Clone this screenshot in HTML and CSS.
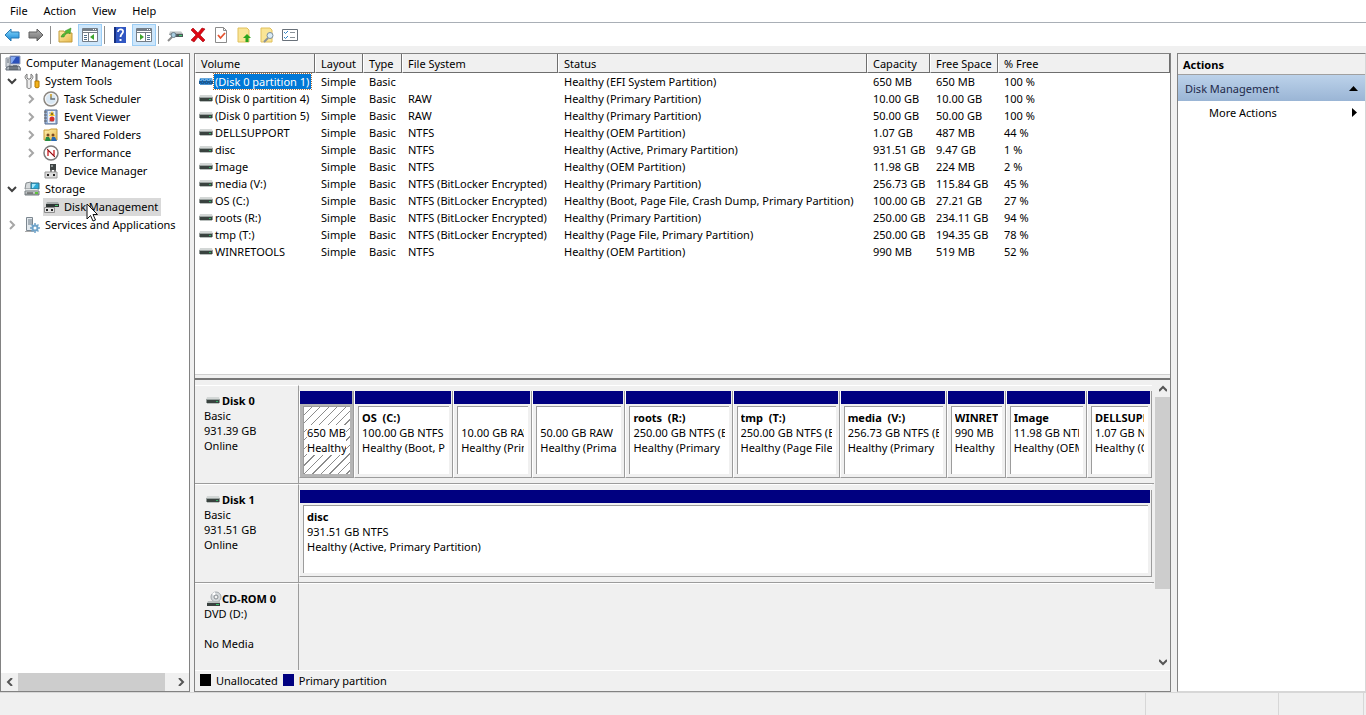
FILE: index.html
```html
<!DOCTYPE html>
<html lang="en">
<head>
  <meta charset="UTF-8">
  <title>Computer Management</title>
  <link rel="stylesheet" href="styles.css">
</head>
<body>
  <svg class="sprite" aria-hidden="true">
    <defs>
      <linearGradient id="blue-arrow" x1="0" y1="0" x2="0" y2="1"><stop offset="0" stop-color="#8fdcfb"/><stop offset="1" stop-color="#1184d6"/></linearGradient>
      <linearGradient id="gray-arrow" x1="0" y1="0" x2="0" y2="1"><stop offset="0" stop-color="#b5b5b5"/><stop offset="1" stop-color="#6f6f6f"/></linearGradient>
      <linearGradient id="folder" x1="0" y1="0" x2="1" y2="1"><stop offset="0" stop-color="#fdf0b0"/><stop offset="1" stop-color="#e8b94c"/></linearGradient>
      <linearGradient id="metal" x1="0" y1="0" x2="0" y2="1"><stop offset="0" stop-color="#e6e8e8"/><stop offset="1" stop-color="#8b9294"/></linearGradient>
    </defs>
    <symbol id="i-down" viewBox="0 0 10 10"><path d="M1 3l4 4 4-4" fill="none" stroke="#404040" stroke-width="2"/></symbol>
    <symbol id="i-right" viewBox="0 0 10 10"><path d="M3 1l4 4-4 4" fill="none" stroke="#a6a6a6" stroke-width="2"/></symbol>
    <symbol id="i-drive" viewBox="0 0 14 7"><path d="M1 0h12l1 3H0z" fill="#d3d7d6"/><path d="M0 2h14v1H0z" fill="#9ba3a1"/><path d="M1 3h12v3H1z" fill="#39423f"/><path d="M0 3h1v3H0zM13 3h1v3h-1z" fill="#8f9694"/><path d="M1 6h12v1H1z" fill="#b9bfbd"/><path d="M10 4h2v1h-2z" fill="#2fae62"/></symbol>
    <symbol id="i-drive-on" viewBox="0 0 14 7"><path d="M1 0h12l1 3H0z" fill="#6aa9dc"/><path d="M0 3h14v3H0z" fill="#1d5a92"/><path d="M1 6h12v1H1z" fill="#4f93cd"/><path d="M1 1h1v1H1zM3 2h1v1H3zM5 1h1v1H5zM7 2h1v1H7zM9 1h1v1H9zM11 2h1v1h-1zM1 5h1v1H1zM3 4h1v1H3zM5 5h1v1H5zM7 4h1v1H7zM9 5h1v1H9zM11 4h1v1h-1z" fill="#0f7ad8"/></symbol>
    <symbol id="i-cdrom" viewBox="0 0 16 16"><circle cx="10" cy="6" r="5" fill="#d5d9dc" stroke="#a3a8ac"/><path d="M10 6L6 3a5 5 0 0 1 3-2z" fill="#fff"/><circle cx="10" cy="6" r="2" fill="#f4f4f4" stroke="#858b90"/><path d="M2 10h12v2H1z" fill="#b4baba" opacity=".9"/><path d="M1 12h13v3H1z" fill="#39413f"/><path d="M10 13h3v1h-3z" fill="#36c46a"/></symbol>
    <symbol id="i-computer" viewBox="0 0 16 16"><path d="M5 1h10v8H5z" fill="#2b50ba" stroke="#9aa5ba"/><path d="M6 2h5L7 8H6z" fill="#86aaf0"/><path d="M8 10h4v1H8z" fill="#7d8592"/><path d="M1 3h4v9H1z" fill="#cfd4da" stroke="#8d959f"/><path d="M2 5h2M2 7h2" stroke="#69717c"/><path d="M1 13l3-2h10l2 3v1H1z" fill="#aeb5bd" stroke="#626b77"/><path d="M4 12h9M4 14h9" stroke="#343c46"/></symbol>
    <symbol id="i-tools" viewBox="0 0 16 16"><path d="M3 1v4l1 1h2l1-1V1c3 2 2 5 0 6v7c0 2-4 2-4 0V7C1 6 0 3 3 1z" fill="#ececec" stroke="#777"/><path d="M12 1h1v7h-1z" fill="#aaa" stroke="#777"/><path d="M11 8h4v6c0 1-4 1-4 0z" fill="#f3b31b" stroke="#b57800"/></symbol>
    <symbol id="i-clock" viewBox="0 0 16 16"><circle cx="8" cy="8" r="7" fill="#f2f4f6" stroke="#8b8781" stroke-width="1.500"/><circle cx="8" cy="8" r="5" fill="#d9e8f4"/><path d="M8 3v5h4" fill="none" stroke="#66727b" stroke-width="1.500"/><path d="M8 8L7 3h2z" fill="#e4b53d"/></symbol>
    <symbol id="i-event" viewBox="0 0 16 16"><path d="M2 1h12v14H2z" fill="#9db9df" stroke="#586c8f"/><path d="M5 2h7v12H5z" fill="#eef1f7"/><path d="M6 4h5M6 12h5" stroke="#7a90b8"/><path d="M1 3h3M1 6h3M1 9h3M1 12h3" stroke="#606060"/><path d="M9 2l3 5H6z" fill="#f5c527"/><path d="M9 4v2" stroke="#222"/><circle cx="9" cy="10" r="2.500" fill="#d5322e"/></symbol>
    <symbol id="i-shared" viewBox="0 0 16 16"><path d="M1 3h5l2-1h6v11H1z" fill="url(#folder)" stroke="#c79a36"/><circle cx="5" cy="8" r="1.500" fill="#7a4a24"/><path d="M2 14l1-4h3l2 4z" fill="#258c43"/><circle cx="10" cy="8" r="1.500" fill="#7a4a24"/><path d="M8 14l1-4h3l2 4z" fill="#2769b2"/></symbol>
    <symbol id="i-perf" viewBox="0 0 16 16"><circle cx="8" cy="8" r="7" fill="#fff" stroke="#7c7c7c" stroke-width="1.500"/><path d="M5 11V5l6 6V5" fill="none" stroke="#c91e22" stroke-width="1.300"/><path d="M4 4l8 8" stroke="#7e181a"/></symbol>
    <symbol id="i-device" viewBox="0 0 16 16"><path d="M7 1h6v6H7z" fill="#3f4444"/><path d="M8 2h2v2H8z" fill="#8b9292"/><path d="M11 7h2v3h-2zM7 7h2v2H7z" fill="#777"/><path d="M2 9h12v6H2z" fill="#dcdcdc" stroke="#999"/><path d="M4 11h2v2H4zM10 11h2v2h-2z" fill="#222"/></symbol>
    <symbol id="i-storage" viewBox="0 0 16 16"><path d="M2 2l5-1 2 2v5H1z" fill="#d6dadc" stroke="#848b8e"/><path d="M7 2h8v6H7z" fill="#2cabd8" stroke="#357187"/><path d="M8 3h4L9 7H8z" fill="#a7e9fb"/><path d="M2 8h11l2 2H1z" fill="#e5e8e8"/><path d="M1 10h14v4H1z" fill="url(#metal)" stroke="#757d80"/><path d="M3 12h6" stroke="#444"/><path d="M11 11h3v2h-3z" fill="#5ec23b"/></symbol>
    <symbol id="i-diskmgmt" viewBox="0 0 16 16"><path d="M4 3h11l1 2H3z" fill="#a8adad"/><path d="M3 5h13v3H3z" fill="#303736"/><path d="M12 6h3v1h-3z" fill="#4ac96e"/><path d="M1.500 8.500h10v5h-10z" fill="#e4e4e4" stroke="#8d8d8d"/><path d="M3 10h2v2H3zM8 10h2v2H8z" fill="#222"/></symbol>
    <symbol id="i-services" viewBox="0 0 16 16"><path d="M2.500.500h6v13h-6z" fill="#e3e9ee" stroke="#7c8790"/><path d="M4 3h4M4 5h4M4 7h4" stroke="#6b7883"/><path d="M1 14.500h9" stroke="#aaa"/><circle cx="11" cy="11" r="2.500" fill="#fff" stroke="#6fa3c9" stroke-width="2"/><path d="M11 6v2M11 14v2M6 11h2M14 11h2M7.500 7.500L9 9M13 13l1.500 1.500M14.500 7.500L13 9M9 13l-1.500 1.500" stroke="#6fa3c9" stroke-width="1.500"/></symbol>
    <symbol id="i-back" viewBox="0 0 16 16"><path d="M1 8l6-6v3h8v6H7v3z" fill="url(#blue-arrow)" stroke="#2779b2"/></symbol>
    <symbol id="i-forward" viewBox="0 0 16 16"><path d="M15 8L9 2v3H1v6h8v3z" fill="url(#gray-arrow)" stroke="#5f5f5f"/></symbol>
    <symbol id="i-up" viewBox="0 0 16 16"><path d="M1 4h5l1 2h7v9H1z" fill="url(#folder)" stroke="#c39b3b"/><path d="M3 10c1-3 3-4 5-4L7 4l6-3-1 6-1-1c-3 0-4 2-5 4z" fill="#51b934" stroke="#2f8620" stroke-width=".5"/></symbol>
    <symbol id="i-treepane" viewBox="0 0 16 16"><path d="M.5 1.500h15v13H.500z" fill="#fff" stroke="#747d86"/><path d="M1 2h14v2H1z" fill="#747d86"/><path d="M1 5.500h14M6.500 6v8" stroke="#747d86"/><path d="M2 8.500h3M2 10.500h3M2 12.500h3" stroke="#4f6f8c"/><path d="M12 7v6l-4-3z" fill="#3ea52d"/><path d="M11 2h1v1h-1zM13 2h1v1h-1z" fill="#fff"/></symbol>
    <symbol id="i-actionpane" viewBox="0 0 16 16"><path d="M.5 1.500h15v13H.500z" fill="#fff" stroke="#747d86"/><path d="M1 2h14v2H1z" fill="#747d86"/><path d="M1 5.500h14M9.500 6v8" stroke="#747d86"/><path d="M11 8.500h3M11 10.500h3M11 12.500h3" stroke="#4f6f8c"/><path d="M4 7v6l4-3z" fill="#3ea52d"/><path d="M11 2h1v1h-1zM13 2h1v1h-1z" fill="#fff"/></symbol>
    <symbol id="i-help" viewBox="0 0 16 16"><path d="M2 0h12v16H2z" fill="#3157c2"/><path d="M2 0h2v16H2z" fill="#17307f"/><path d="M6 5c0-4 6-3 5 0-.500 2-2.500 2-2.500 5" fill="none" stroke="#fff" stroke-width="1.800"/><path d="M7.500 12h2v2h-2z" fill="#fff"/></symbol>
    <symbol id="i-rescan" viewBox="0 0 16 16"><path d="M3 4h11l2 3v1H2z" fill="url(#metal)"/><path d="M4 7h12v3H4z" fill="#4c5959"/><path d="M12 8h3v1h-3z" fill="#45cf70"/><path d="M1 14l4-4" stroke="#8a8a8a" stroke-width="2"/><circle cx="6.500" cy="8" r="2.500" fill="#a8cde0" stroke="#6c7c88"/></symbol>
    <symbol id="i-delete" viewBox="0 0 16 16"><path d="M3 1l5 5 4-5 3 1-5 6 5 5-2 2-5-5-4 5-3-2 5-5-5-5z" fill="#df0712" stroke="#9c0009" stroke-width=".6"/></symbol>
    <symbol id="i-check" viewBox="0 0 16 16"><path d="M2.500.500h8l3 3v12h-11z" fill="#fff" stroke="#8b8b8b"/><path d="M10.500.500v3h3" fill="none" stroke="#8b8b8b"/><path d="M5 8l2.500 3L12 6" fill="none" stroke="#e5532f" stroke-width="1.800"/></symbol>
    <symbol id="i-newfolder" viewBox="0 0 16 16"><path d="M2 1h9l2 2v12H2z" fill="#fae596" stroke="#e0c05c"/><path d="M11 7l4 4h-2.500v4h-3v-4H7z" fill="#2ba51e"/></symbol>
    <symbol id="i-search" viewBox="0 0 16 16"><path d="M2 1h9l2 2v12H2z" fill="#fae596" stroke="#e0c05c"/><path d="M5 15l4-4" stroke="#8b9298" stroke-width="2"/><circle cx="11" cy="8.500" r="3" fill="#d9ecf7" stroke="#7e8e9b"/></symbol>
    <symbol id="i-list" viewBox="0 0 16 16"><path d="M.5 2.500h15v11H.500z" fill="#fff" stroke="#69717a"/><path d="M2 5l1.500 1.500L6 4M2 10l1.500 1.500L6 9" fill="none" stroke="#2f83c5"/><path d="M8 5.500h5M8 10.500h5" stroke="#8b939a"/></symbol>
    <symbol id="i-cursor" viewBox="0 0 12 19"><path d="M1 1v15l3.500-3.500L7 18l2.500-1L7 11.500h4.500z" fill="#fff" stroke="#111"/></symbol>
  </svg>

  <nav class="menubar">
    <button>File</button>
    <button>Action</button>
    <button>View</button>
    <button>Help</button>
  </nav>

  <div class="toolbar">
    <button aria-label="Back"><svg><use href="#i-back"/></svg></button>
    <button aria-label="Forward"><svg><use href="#i-forward"/></svg></button>
    <span class="divider"></span>
    <button aria-label="Up one level"><svg><use href="#i-up"/></svg></button>
    <button class="pressed" aria-label="Console tree"><svg><use href="#i-treepane"/></svg></button>
    <span class="divider"></span>
    <button aria-label="Help topics"><svg><use href="#i-help"/></svg></button>
    <button class="pressed" aria-label="Action pane"><svg><use href="#i-actionpane"/></svg></button>
    <span class="divider"></span>
    <div class="disk-tools">
      <button aria-label="Rescan disks"><svg><use href="#i-rescan"/></svg></button>
      <button aria-label="Delete"><svg><use href="#i-delete"/></svg></button>
      <button aria-label="Mark as active"><svg><use href="#i-check"/></svg></button>
      <button aria-label="Open"><svg><use href="#i-newfolder"/></svg></button>
      <button aria-label="Explore"><svg><use href="#i-search"/></svg></button>
      <button aria-label="Properties"><svg><use href="#i-list"/></svg></button>
    </div>
  </div>

  <main class="console">
    <aside class="pane tree-pane">
      <ul class="tree">
        <li class="root"><a href="#"><svg class="icon"><use href="#i-computer"/></svg><span>Computer Management (Local</span></a></li>
        <li class="level1"><svg class="chevron"><use href="#i-down"/></svg><a href="#"><svg class="icon"><use href="#i-tools"/></svg><span>System Tools</span></a></li>
        <li class="level2"><svg class="chevron"><use href="#i-right"/></svg><a href="#"><svg class="icon"><use href="#i-clock"/></svg><span>Task Scheduler</span></a></li>
        <li class="level2"><svg class="chevron"><use href="#i-right"/></svg><a href="#"><svg class="icon"><use href="#i-event"/></svg><span>Event Viewer</span></a></li>
        <li class="level2"><svg class="chevron"><use href="#i-right"/></svg><a href="#"><svg class="icon"><use href="#i-shared"/></svg><span>Shared Folders</span></a></li>
        <li class="level2"><svg class="chevron"><use href="#i-right"/></svg><a href="#"><svg class="icon"><use href="#i-perf"/></svg><span>Performance</span></a></li>
        <li class="level2"><span class="chevron"></span><a href="#"><svg class="icon"><use href="#i-device"/></svg><span>Device Manager</span></a></li>
        <li class="level1"><svg class="chevron"><use href="#i-down"/></svg><a href="#"><svg class="icon"><use href="#i-storage"/></svg><span>Storage</span></a></li>
        <li class="level2"><span class="chevron"></span><a href="#" class="current"><svg class="icon"><use href="#i-diskmgmt"/></svg><span>Disk Management</span></a><svg class="cursor"><use href="#i-cursor"/></svg></li>
        <li class="level1"><svg class="chevron"><use href="#i-right"/></svg><a href="#"><svg class="icon"><use href="#i-services"/></svg><span>Services and Applications</span></a></li>
      </ul>
      <div class="hscroll">
        <button aria-label="Scroll left"><svg viewBox="0 0 8 8"><path d="M6 0L2 4l4 4"/></svg></button>
        <span class="thumb"></span>
        <button aria-label="Scroll right"><svg viewBox="0 0 8 8"><path d="M2 0l4 4-4 4"/></svg></button>
      </div>
    </aside>

    <section class="pane center-pane">
      <div class="volumes">
        <table>
          <colgroup>
            <col class="c-volume"><col class="c-layout"><col class="c-type"><col class="c-fs"><col class="c-status"><col class="c-capacity"><col class="c-free"><col>
          </colgroup>
          <thead>
            <tr><th>Volume</th><th>Layout</th><th>Type</th><th>File System</th><th>Status</th><th>Capacity</th><th>Free Space</th><th>% Free</th></tr>
          </thead>
          <tbody>
            <tr class="selected"><td><svg class="drive"><use href="#i-drive-on"/></svg><span>(Disk 0 partition 1)</span></td><td>Simple</td><td>Basic</td><td></td><td>Healthy (EFI System Partition)</td><td>650 MB</td><td>650 MB</td><td>100 %</td></tr>
            <tr><td><svg class="drive"><use href="#i-drive"/></svg><span>(Disk 0 partition 4)</span></td><td>Simple</td><td>Basic</td><td>RAW</td><td>Healthy (Primary Partition)</td><td>10.00 GB</td><td>10.00 GB</td><td>100 %</td></tr>
            <tr><td><svg class="drive"><use href="#i-drive"/></svg><span>(Disk 0 partition 5)</span></td><td>Simple</td><td>Basic</td><td>RAW</td><td>Healthy (Primary Partition)</td><td>50.00 GB</td><td>50.00 GB</td><td>100 %</td></tr>
            <tr><td><svg class="drive"><use href="#i-drive"/></svg><span>DELLSUPPORT</span></td><td>Simple</td><td>Basic</td><td>NTFS</td><td>Healthy (OEM Partition)</td><td>1.07 GB</td><td>487 MB</td><td>44 %</td></tr>
            <tr><td><svg class="drive"><use href="#i-drive"/></svg><span>disc</span></td><td>Simple</td><td>Basic</td><td>NTFS</td><td>Healthy (Active, Primary Partition)</td><td>931.51 GB</td><td>9.47 GB</td><td>1 %</td></tr>
            <tr><td><svg class="drive"><use href="#i-drive"/></svg><span>Image</span></td><td>Simple</td><td>Basic</td><td>NTFS</td><td>Healthy (OEM Partition)</td><td>11.98 GB</td><td>224 MB</td><td>2 %</td></tr>
            <tr><td><svg class="drive"><use href="#i-drive"/></svg><span>media (V:)</span></td><td>Simple</td><td>Basic</td><td>NTFS (BitLocker Encrypted)</td><td>Healthy (Primary Partition)</td><td>256.73 GB</td><td>115.84 GB</td><td>45 %</td></tr>
            <tr><td><svg class="drive"><use href="#i-drive"/></svg><span>OS (C:)</span></td><td>Simple</td><td>Basic</td><td>NTFS (BitLocker Encrypted)</td><td>Healthy (Boot, Page File, Crash Dump, Primary Partition)</td><td>100.00 GB</td><td>27.21 GB</td><td>27 %</td></tr>
            <tr><td><svg class="drive"><use href="#i-drive"/></svg><span>roots (R:)</span></td><td>Simple</td><td>Basic</td><td>NTFS (BitLocker Encrypted)</td><td>Healthy (Primary Partition)</td><td>250.00 GB</td><td>234.11 GB</td><td>94 %</td></tr>
            <tr><td><svg class="drive"><use href="#i-drive"/></svg><span>tmp (T:)</span></td><td>Simple</td><td>Basic</td><td>NTFS (BitLocker Encrypted)</td><td>Healthy (Page File, Primary Partition)</td><td>250.00 GB</td><td>194.35 GB</td><td>78 %</td></tr>
            <tr><td><svg class="drive"><use href="#i-drive"/></svg><span>WINRETOOLS</span></td><td>Simple</td><td>Basic</td><td>NTFS</td><td>Healthy (OEM Partition)</td><td>990 MB</td><td>519 MB</td><td>52 %</td></tr>
          </tbody>
        </table>
      </div>
      <div class="splitter"></div>
      <div class="disk-view">
        <div class="disks">
          <div class="disk">
            <div class="disk-label">
              <h2><svg class="drive"><use href="#i-drive"/></svg>Disk 0</h2>
              <p>Basic</p><p>931.39 GB</p><p>Online</p>
            </div>
            <div class="partitions" style="grid-template-columns: 55fr 99fr 79fr 93fr 107fr 107fr 107fr 59fr 81fr 65fr">
              <div class="part active"><div class="box"><h3></h3><p>650 MB</p><p>Healthy</p></div></div>
              <div class="part"><div class="box"><h3>OS&nbsp; (C:)</h3><p>100.00 GB NTFS</p><p>Healthy (Boot, P</p></div></div>
              <div class="part"><div class="box"><h3></h3><p>10.00 GB RAW</p><p>Healthy (Prim</p></div></div>
              <div class="part"><div class="box"><h3></h3><p>50.00 GB RAW</p><p>Healthy (Primar</p></div></div>
              <div class="part"><div class="box"><h3>roots&nbsp; (R:)</h3><p>250.00 GB NTFS (B</p><p>Healthy (Primary</p></div></div>
              <div class="part"><div class="box"><h3>tmp&nbsp; (T:)</h3><p>250.00 GB NTFS (B</p><p>Healthy (Page File</p></div></div>
              <div class="part"><div class="box"><h3>media&nbsp; (V:)</h3><p>256.73 GB NTFS (B</p><p>Healthy (Primary</p></div></div>
              <div class="part"><div class="box"><h3>WINRET</h3><p>990 MB</p><p>Healthy</p></div></div>
              <div class="part"><div class="box"><h3>Image</h3><p>11.98 GB NTF</p><p>Healthy (OEM</p></div></div>
              <div class="part"><div class="box"><h3>DELLSUPP</h3><p>1.07 GB NT</p><p>Healthy (O</p></div></div>
            </div>
          </div>
          <div class="disk">
            <div class="disk-label">
              <h2><svg class="drive"><use href="#i-drive"/></svg>Disk 1</h2>
              <p>Basic</p><p>931.51 GB</p><p>Online</p>
            </div>
            <div class="partitions" style="grid-template-columns: 1fr">
              <div class="part"><div class="box"><h3>disc</h3><p>931.51 GB NTFS</p><p>Healthy (Active, Primary Partition)</p></div></div>
            </div>
          </div>
          <div class="disk">
            <div class="disk-label">
              <h2><svg class="cdrom"><use href="#i-cdrom"/></svg>CD-ROM 0</h2>
              <p>DVD (D:)</p><p>&nbsp;</p><p>No Media</p>
            </div>
            <div class="partitions"></div>
          </div>
        </div>
        <div class="vscroll">
          <button aria-label="Scroll up"><svg viewBox="0 0 8 8"><path d="M0 6l4-4 4 4"/></svg></button>
          <span class="thumb"></span>
          <button aria-label="Scroll down"><svg viewBox="0 0 8 8"><path d="M0 2l4 4 4-4"/></svg></button>
        </div>
      </div>
      <div class="legend">
        <span class="swatch unallocated"></span><span>Unallocated</span>
        <span class="swatch primary"></span><span>Primary partition</span>
      </div>
    </section>

    <aside class="pane actions-pane">
      <h2>Actions</h2>
      <button class="group">Disk Management<svg viewBox="0 0 9 5"><path d="M0 5l4.500-5L9 5z"/></svg></button>
      <button class="action">More Actions<svg viewBox="0 0 5 9"><path d="M0 0l5 4.500L0 9z"/></svg></button>
    </aside>
  </main>

  <footer class="statusbar">
    <span class="message"></span><span class="cell"></span><span class="cell last"></span>
  </footer>
</body>
</html>
```

FILE: styles.css
```css
* {
  box-sizing: border-box;
}

body {
  margin: 0;
  height: 100vh;
  display: flex;
  flex-direction: column;
  overflow: hidden;
  background: #f0f0f0;
  color: #000;
  font-family: "Noto Sans", "Open Sans", sans-serif;
  font-size: 11px;
  line-height: 15px;
}

h2, h3, p, ul {
  margin: 0;
  padding: 0;
  font-size: inherit;
}

button {
  margin: 0;
  padding: 0;
  border: 0;
  background: none;
  color: inherit;
  font: inherit;
}

svg {
  display: block;
  flex: none;
}

.sprite {
  position: absolute;
  width: 0;
  height: 0;
}

/* Menu and toolbar */
.menubar {
  display: flex;
  gap: 16px;
  height: 22px;
  padding: 0 10px 2px;
  background: #fff;
}

.toolbar {
  display: flex;
  align-items: center;
  height: 24px;
  background: #fff;
  border-top: 1px solid #a9afb6;
}

.toolbar button {
  display: flex;
  align-items: center;
  justify-content: center;
  width: 24px;
  height: 22px;
}

.toolbar svg {
  width: 16px;
  height: 16px;
}

.toolbar .pressed {
  background: #cde6fb;
  border: 1px solid #9bcdf5;
}

.divider {
  width: 1px;
  height: 18px;
  margin: 0 3px 0 2px;
  background: #8d8d8d;
}

.disk-tools {
  display: flex;
  padding-left: 1px;
}

.toolbar .disk-tools button {
  width: 23px;
}

/* Console layout */
.console {
  flex: 1;
  min-height: 0;
  display: grid;
  grid-template-columns: 190px 1fr 189px;
  padding-top: 7px;
}

.pane {
  display: flex;
  flex-direction: column;
  min-width: 0;
  min-height: 0;
  border: 1px solid #828282;
  background: #fff;
}

.center-pane {
  margin: 0 6px 0 4px;
  background: #f0f0f0;
}

.actions-pane {
  border-right-color: #d7d7d7;
  border-bottom-color: #d7d7d7;
}

/* Tree */
.tree {
  flex: 1;
  list-style: none;
  overflow: hidden;
  white-space: nowrap;
}

.tree li {
  display: flex;
  align-items: center;
  height: 18px;
  position: relative;
}

.tree a {
  display: flex;
  align-items: center;
  gap: 5px;
  height: 18px;
  padding-right: 3px;
  color: inherit;
  text-decoration: none;
}

.tree a span {
  padding-bottom: 2px;
}

.tree a.current {
  background: #d9d9d9;
}

.root {
  padding-left: 4px;
}

.level1 {
  padding-left: 6px;
}

.level2 {
  padding-left: 25px;
}

.icon {
  width: 16px;
  height: 16px;
}

.chevron {
  width: 10px;
  height: 10px;
  margin-right: 7px;
}

.cursor {
  position: absolute;
  left: 85px;
  top: 5px;
  width: 12px;
  height: 19px;
  z-index: 2;
}

/* Scroll bars */
.hscroll,
.vscroll {
  display: flex;
  background: #f0f0f0;
}

.hscroll {
  height: 18px;
}

.vscroll {
  flex-direction: column;
  width: 16px;
}

.hscroll button,
.vscroll button {
  display: flex;
  align-items: center;
  justify-content: center;
  width: 17px;
  height: 17px;
}

.hscroll svg,
.vscroll svg {
  width: 8px;
  height: 8px;
  fill: none;
  stroke: #555;
  stroke-width: 2;
}

.thumb {
  background: #cdcdcd;
}

.hscroll .thumb {
  flex: 1;
  margin-right: 7px;
}

.vscroll .thumb {
  flex: 1;
  margin: 0 0 64px 1px;
}

/* Volume list */
.volumes {
  flex: 0 0 320px;
  background: #fff;
  overflow: hidden;
}

table {
  width: 100%;
  table-layout: fixed;
  border-collapse: separate;
  border-spacing: 0;
}

.c-volume { width: 120px; }
.c-layout { width: 48px; }
.c-type { width: 39px; }
.c-fs { width: 156px; }
.c-status { width: 309px; }
.c-capacity { width: 63px; }
.c-free { width: 68px; }

th {
  height: 19px;
  padding: 0 0 0 5px;
  background: #f0f0f0;
  border-right: 1px solid #6e6e6e;
  border-bottom: 1px solid #6e6e6e;
  border-left: 1px solid #fff;
  font-weight: normal;
  text-align: left;
  white-space: nowrap;
}

td {
  height: 17px;
  padding: 0 0 0 6px;
  white-space: nowrap;
}

td:first-child {
  display: flex;
  align-items: center;
  gap: 1px;
  padding-left: 4px;
}

td:first-child span {
  padding: 0 2px 0 1px;
}

.selected td span {
  background: #0078d7;
  color: #fff;
  outline: 1px dotted #b0703a;
}

.drive {
  width: 14px;
  height: 7px;
}

.splitter {
  height: 6px;
  border-top: 1px solid #d0d0d0;
  border-bottom: 2px solid #777;
}

/* Graphical disk view */
.disk-view {
  flex: 1;
  min-height: 0;
  display: flex;
}

.disks {
  flex: 1;
  min-width: 0;
  overflow: hidden;
  padding-top: 5px;
}

.disk {
  display: flex;
  height: 99px;
  border-bottom: 1px solid #9c9c9c;
}

.disk-label {
  width: 104px;
  padding: 7px 0 0 9px;
  border-top: 1px solid #fff;
  border-right: 1px solid #9c9c9c;
}

.disk-label h2 {
  display: flex;
  align-items: center;
  gap: 2px;
  height: 15px;
  padding-left: 2px;
}

.disk-label .cdrom {
  width: 16px;
  height: 16px;
  margin-right: -2px;
}

.partitions {
  flex: 1;
  min-width: 0;
  display: grid;
  margin-right: 2px;
  padding: 5px 0;
  border-top: 1px solid #fff;
}

.part {
  min-width: 0;
  display: flex;
  flex-direction: column;
  border-right: 1px solid #9c9c9c;
  border-bottom: 1px solid #9c9c9c;
  border-left: 1px solid #fff;
}

.part::before {
  content: "";
  height: 13px;
  margin-right: 1px;
  background: #000080;
}

.part.active {
  background: #b4b4b4;
}

.box {
  flex: 1;
  margin: 2px 3px 3px;
  padding: 3px 4px 0 3px;
  overflow: hidden;
  background: #fff;
  border-top: 1px solid #9c9c9c;
  border-left: 1px solid #9c9c9c;
  white-space: nowrap;
}

.box h3,
.box p {
  height: 15px;
  overflow: hidden;
}

.active .box {
  background: repeating-linear-gradient(135deg, #fff 0 5px, #8c8c8c 5px 6px);
}

.active .box p {
  background: #fff;
}

.legend {
  display: flex;
  align-items: center;
  gap: 5px;
  height: 21px;
  padding: 0 0 2px 5px;
  border-top: 1px solid #fff;
}

.swatch {
  width: 11px;
  height: 12px;
}

.unallocated {
  background: #000;
}

.primary {
  background: #000080;
}

/* Actions */
.actions-pane h2 {
  height: 21px;
  padding: 3px 5px 0;
  background: #f0f0f0;
  border-bottom: 1px solid #a0a0a0;
}

.actions-pane button {
  display: flex;
  align-items: center;
  justify-content: space-between;
  height: 22px;
}

.actions-pane .group {
  height: 26px;
  padding: 0 7px;
  background: linear-gradient(#bcd2ea, #9ab5d5);
  color: #1e2a4a;
}

.actions-pane .action {
  padding: 0 8px 0 31px;
}

.group svg {
  width: 9px;
  height: 5px;
}

.action svg {
  width: 5px;
  height: 9px;
}

/* Status bar */
.statusbar {
  display: flex;
  height: 23px;
  border-top: 1px solid #d7d7d7;
}

.message {
  flex: 1;
}

.cell {
  width: 133px;
  border-left: 1px solid #d7d7d7;
}

.cell.last {
  width: 86px;
  margin-right: 2px;
  border-right: 1px solid #d7d7d7;
}
```
